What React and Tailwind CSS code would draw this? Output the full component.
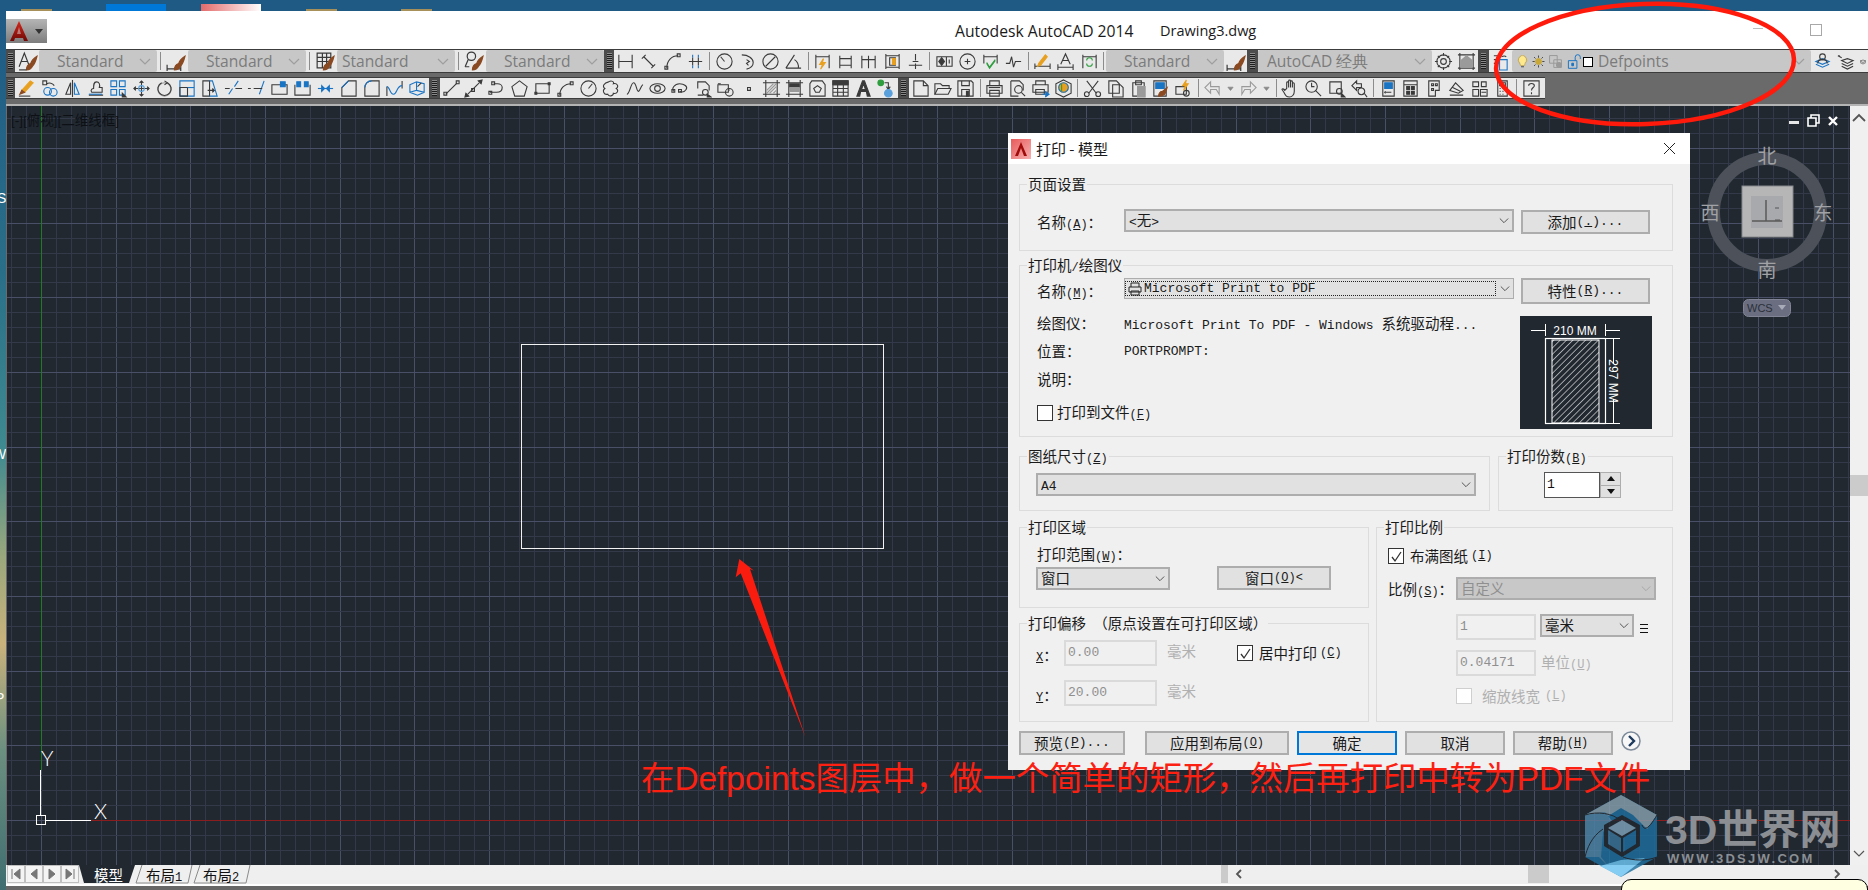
import React from "react";

const K = "#3a3a3a", B = "#1a74c4", R = "#8a4a22", O = "#e8a020", G = "#2f9e3f", Y = "#9a9a9a", L = "#5aa0dc";
const c = (x, y, r) => `M${x - r} ${y}a${r} ${r} 0 1 0 ${2 * r} 0a${r} ${r} 0 1 0 ${-2 * r} 0`;
const brush = [R, "M9 18c0-3 1-5 4-6 1-3 3-5 6-7-1 4-2 7-4 9-1 2-3 4-6 4z", 1];
const dd = Object.assign([["#888", "M6 8h8l-4 5z", 1]], { w: 13 });

const textStyle = [[K, "M2 15L7 2l5 13M4 10h6"], brush, [K, "M2 18h7"]];
const dimStyle = [[K, "M2 17h13M2 13v6M15 13v6"], brush];
const tblStyle = [[K, "M3 2h13v14H3zM3 6h13M3 10h13M8 2v14M12 2v14"], brush];
const mlStyle = [[K, c(8, 5, 4)], [K, "M5 8L2 15M2 15h4"], brush];

const row1b = [
  [[K, "M3 3v14M17 3v14M3 10h14"]],
  [[K, "M3 7l4-4M13 17l4-4M5 5l10 10"]],
  [[K, "M4 17C4 9 9 4 16 4"], [K, "M2 15h3v3H2zM15 2h3v3h-3z"]],
  [[B, "M7 3v3M13 3v3M7 14v3M13 14v3"], [K, "M3 10h14M7 6v8M13 6v8"]],
  0,
  [[K, c(10, 10, 8)], [K, "M10 10L6 5"]],
  [[K, "M4 3c7 0 12 4 12 8 0 4-3 6-7 7M9 8l3 2-3 2 2 2"]],
  [[K, c(10, 10, 8)], [K, "M5 15L15 5"]],
  [[K, "M2 17h16M2 17L11 3M11 8a9 9 0 0 1 4 9"]],
  0,
  [[K, "M3 3v14M17 3v14M3 5h14"], [O, "M11 7l-4 6h3l-2 5 5-7h-3z", 1]],
  [[K, "M4 4v13M16 4v13M4 7h12M4 14h12"]],
  [[K, "M3 4v13M10 4v13M17 4v13M3 8h14"]],
  [[K, "M3 2v16M17 2v16M3 4h14M3 16h14"], [K, "M7 6h6v8H7z"], [O, "M10 7h3v6h-3z", 1]],
  [[K, "M10 2v7M10 12v6M3 14h14M7 10h6"]],
  0,
  [[K, "M2 5h16v10H2zM12 5v10"], [K, "M7 6l3 4-3 4-3-4z", 1], [K, "M15 8v4"]],
  [[K, c(10, 10, 8)], [K, "M10 7v6M7 10h6"]],
  [[K, "M3 3v9M17 3v9M3 5h14"], [G, "M6 12l3 5 6-8", 0], [G, "M6 11l3 5 6-8"]],
  [[K, "M2 12h4l2-7 2 11 2-6h6"]],
  0,
  [[K, "M2 12v6M18 12v6M2 15h16"], [O, "M6 12l7-9 2 2-7 9-3 1z", 1]],
  [[K, "M5 13L10 2l5 11M7 9h6M2 13v6M18 13v6M2 16h16"]],
  [[K, "M3 3v14M17 3v14M3 5h14"], [G, "M7 9a3 3 0 0 1 6 0M13 12a3 3 0 0 1-6 0"]],
  0,
];

const row2a = [
  [[K, "M2 18h12"], [O, "M5 12l9-10 3 2-9 10z", 1], [R, "M3 16l2-4 3 2z", 1]],
  [[K, "M3 2h4v4H3z"], [K, "M7 5a6 6 0 0 1 8 2"], [B, c(8, 13, 4)], [B, c(14, 14, 4)]],
  [[K, "M10 1v18"], [K, "M8 4L3 16h5z"], [B, "M12 4l5 12h-5z"]],
  [[K, "M3 17h15M6 14c-2-3 1-4 2-4 0-4 0-7 3-7s4 3 3 6h3v5z"], [B, "M3 16h14"]],
  [[B, "M2 2h6v6H2zM11 2h6v6h-6zM2 11h6v6H2zM11 11h6v6h-6z"], [K, "M14 15l4 4h-4z", 1]],
  [[K, "M10 2v16M2 10h16"], [K, "M8 4l2-2 2 2M8 16l2 2 2-2M4 8l-2 2 2 2M16 8l2 2-2 2", 1], [L, c(10, 10, 3)]],
  [[Y, c(10, 11, 7)], [K, "M10 2l3 2-3 2"], [K, "M7 4a7 7 0 1 0 6 0"]],
  [[B, "M2 2h15v16H2z"], [K, "M2 9h8v9H2z"], [B, "M10 9h7"]],
  [[K, "M2 2h7v16H2z"], [B, "M9 2h3l5 16H9"], [K, "M7 12h7M12 10l2 2-2 2", 1]],
  [[B, "M5 16l4-6M11 8l4-6"], [K, "M1 10h5M12 10h7"]],
  [[B, "M13 16l5-14"], [K, "M1 10h3M7 10h9"]],
  [[K, "M2 6h16v10H2z"], [B, "M11 3h5v5h-5z", 1]],
  [[K, "M2 6v11h16V6"], [B, "M4 3h4v5H4zM12 3h4v5h-4z", 1]],
  [[B, "M2 10h16"], [B, "M6 7l3 3-3 3zM14 7l-3 3 3 3z", 1]],
  [[K, "M3 18V9l7-7h8v16z"], [B, "M3 9l7-7"]],
  [[K, "M3 18V9c0-4 3-7 7-7h8v16z"], [B, "M3 9c0-4 3-7 7-7"]],
  [[K, "M2 8v10M18 2v8"], [B, "M2 8c3 0 3 8 7 8s3-9 9-9"]],
  [[B, "M2 6l7-3 8 2v9l-7 3-8-3zM9 3v9l-7 2M9 12l8 2"], [K, "M10 8l4-4"]],
];
const row2b = [
  [[K, "M4 16L16 4"], [K, "M2 14h3v3H2zM15 2h3v3h-3z"]],
  [[K, "M4 16L16 4"], [K, "M1 19l4-1-3-3zM19 1l-4 1 3 3z", 1], [K, "M8 10h3v3H8z"]],
  [[K, "M3 14h7c5 0 6-3 6-5s-2-4-5-4H7"], [K, "M2 13h3v3H2zM5 3h3v3H5z"]],
  [[K, "M10 2l8 6-3 10H5L2 8z"]],
  [[K, "M3 5h14v10H3z"], [K, "M2 14h2v2H2zM16 4h2v2h-2z", 1]],
  [[K, "M4 17c0-7 5-12 12-12"], [K, "M2 15h3v3H2zM15 3h3v3h-3z"]],
  [[K, c(10, 10, 8)], [K, "M10 10l4-5"]],
  [[K, "M7 3c3-2 6 0 5 2 4-1 6 3 3 5 3 2 1 6-3 5 0 3-5 4-6 1-4 1-6-4-3-6-3-2-1-6 4-7z"]],
  [[K, "M2 16c3 0 4-12 7-12s3 9 5 9 3-7 5-7"]],
  [[K, c(10, 10, 3)], [K, "M2 10c0-3 4-5 8-5s8 2 8 5-4 5-8 5-8-2-8-5z"]],
  [[K, "M4 13c-3-3 1-8 6-8s9 3 7 6-5 3-7 2"], [K, "M2 11h3v3H2zM9 11h3v3H9z"]],
  [[K, "M5 10V3h8l4 4v5M5 17h6"], [K, c(13, 14, 3)], [K, "M15 16l4 3h-4z", 1]],
  [[K, "M2 6h11v8H2z"], [K, c(14, 14, 4)], [K, "M2 5h3M14 11v1"]],
  [[K, "M9 9h3v3H9z"]],
  [[K, "M4 4h12v12H4zM1 4h18M1 16h18M4 1v18M16 1v18"], [Y, "M5 12l7-7M5 15l10-10M8 15l7-7M12 15l3-3"]],
  [[K, "M4 4h12v12H4zM1 4h18M1 16h18M4 1v18M16 1v18"], [K, "M5 5h10v4H5z", 1], [Y, "M5 9h10v4H5z", 1]],
  [[K, "M4 2h11l3 4v12H2V5z"], [K, "M6 10l4-3 4 3-2 4H8z"]],
  [[K, "M2 2h16v16H2zM2 6h16M2 10h16M2 14h16M7 6v12M13 6v12"], [K, "M2 2h16v4H2z", 1]],
  [[K, "M3 18L9 2h2l6 16h-3l-1-5H7l-1 5zM8 11h4l-2-6z", 1]],
  [[G, c(5, 4, 3), 1], [K, "M9 4h4v6M11 8l2 3 2-3"], [L, c(13, 15, 4), 1]],
];
const row2c = [
  [[K, "M3 2h10l5 5v11H3zM13 2v5h5"]],
  [[K, "M2 16V5h6l2 2h7v3"], [K, "M2 16l3-6h14l-3 6z", 0]],
  [[K, "M2 2h14l2 2v14H2zM6 2v5h8V2M6 18v-7h8v7"], [K, "M11 13h2v5h-2z", 1]],
  0,
  [[K, "M5 7V2h10v5M2 7h16v8H2zM5 12h10v6H5z"], [K, "M4 9h12", 0]],
  [[K, "M3 2h9l4 4v6M3 2v16h8"], [K, c(11, 11, 4)], [K, "M14 14l4 4"]],
  [[K, "M5 6V2h10v4M2 6h16v8H2zM5 11h9v5H5z"], [B, "M12 16h5M15 13l4 3-4 3", 1]],
  [[K, "M10 1l8 4v10l-8 4-8-4V5z"], [O, c(10, 9, 5), 1], [B, c(10, 9, 5)], [G, "M8 5v8"]],
  0,
  [[K, "M4 2l10 13M16 2L6 15"], [K, c(4, 16, 2.5)], [K, c(16, 16, 2.5)]],
  [[K, "M3 2h8l3 3v10H3z"], [K, "M7 6h8l3 3v10H7z"]],
  [[K, "M4 4h12v14H4zM7 2h6v4H7z"], [Y, "M9 8h8v11H9z", 1]],
  [[K, "M3 2h13v16H3z"], [B, "M5 4h9v6H5z", 1], [R, "M8 18c0-3 2-5 4-5l5-4-2 6c-1 2-4 3-7 3z", 1]],
  [[K, "M2 8h11v8H2z"], [K, c(13, 15, 3)], [O, "M13 1l-4 6h3l-2 5 5-7h-3z", 1]],
  0,
  [[Y, "M8 3L2 9l6 6v-4h6l3 5V8h-9z"]],
  dd,
  [[Y, "M12 3l6 6-6 6v-4H6l-3 5V8h9z"]],
  dd,
  0,
  [[K, "M6 10V4a1 1 0 0 1 2 0v5-7a1 1 0 0 1 2 0v7-6a1 1 0 0 1 2 0v6-4a1 1 0 0 1 2 0v8c0 3-2 6-5 6s-4-1-6-5l-2-3c0-1 2-1 3 1z"]],
  [[K, c(8, 8, 6)], [K, "M8 4v4h3M12 12l6 6"]],
  [[K, "M3 3h12v12H3z"], [K, c(13, 13, 3)], [K, "M15 15l4 4h-4z", 1]],
  [[K, "M2 7l5-5v3h5v4H7v3z"], [K, c(12, 13, 3.5)], [K, "M15 15l3 4"]],
  0,
  [[K, "M4 2h12v16H4z"], [B, "M6 4h8v6H6z", 1], [K, "M7 14h6M7 13l-1 1 1 1"]],
  [[K, "M3 2h14v16H3zM3 6h14"], [K, "M6 8h3v3H6zM11 8h3v3h-3zM6 13h3v3H6zM11 13h3v3h-3z", 1]],
  [[K, "M5 2h11v10h-4v6H5zM8 5h2v2H8zM12 5h2v2h-2zM8 10h2v2H8z"]],
  [[K, "M3 12l6-8 8 8-5 3zM3 17h14M6 9l8 4"]],
  [[K, "M3 3h6v5H3zM12 3h5v5h-5zM3 11h6v7H3z"], [K, "M11 11h7v7h-7zM12 14h5"]],
  [[K, "M5 2h10v16H5zM7 4h6v3H7zM7 10h1M10 10h1M13 10h0M7 13h1M10 13h1M7 16h1M10 16h1"]],
  0,
  [[K, "M2 2h16v16H2z"], [K, "M7 7c0-3 6-3 6 0 0 2-3 2-3 5M10 14v2"]],
];

function Ic({ s, w, size = 19 }) {
  return (
    <span className="flex items-center justify-center shrink-0" style={{ width: w }}>
      <svg width={size} height={size} viewBox="0 0 20 20" fill="none" strokeWidth="1.15">
        {s.map(([col, d, f], i) => (
          <path key={i} d={d} stroke={col} fill={f ? col : "none"} />
        ))}
      </svg>
    </span>
  );
}
const Sep = ({ w }) => (
  <span className="flex shrink-0 items-center justify-center" style={{ width: w }}>
    <span className="h-[18px] w-px bg-[#8c8c8c]" />
  </span>
);
const Set = ({ list, w, sw = 6 }) => list.map((s, i) => (s === 0 ? <Sep key={i} w={sw} /> : <Ic key={i} s={s} w={s.w || w} />));

const Grip = ({ w }) => (
  <div className="flex shrink-0 items-center justify-center bg-[#4c4c4c]" style={{ width: w }}>
    <span className="h-[16px] w-[5px] bg-[repeating-linear-gradient(0deg,#1e1e1e_0_1px,#8a8a8a_1px_2px)]" />
  </div>
);
const Chev = ({ col = "#9e9e9e", w = 12 }) => (
  <svg width={w} height="8" viewBox="0 0 12 8" fill="none" stroke={col} strokeWidth="1.2" className="shrink-0">
    <path d="M1 1l5 5 5-5" />
  </svg>
);
function TCombo({ w, pad, text, children }) {
  return (
    <div className="flex shrink-0 items-center rounded-[2px] bg-[#c7c7c7] pr-[6px] pt-px font-['Open_Sans',sans-serif] text-[15.6px] text-[#7b7b7b]" style={{ width: w, paddingLeft: pad }}>
      {children}
      <span className="flex-1 whitespace-nowrap">{text}</span>
      <Chev />
    </div>
  );
}

function T({ t, m }) {
  const parts = t.split(/([\u3000-\u9fff\uff00-\uffef]+)/);
  return (
    <>
      {parts.map((p, i) =>
        i % 2 ? (
          <span key={i} className="font-['Noto_Sans_CJK_SC',sans-serif] text-[14.5px]">{p}</span>
        ) : (
          <span key={i} className={"font-['Liberation_Mono',monospace] " + (m ? "text-[13px]" : "text-[12px]")}>
            {p.split(/_(.)/).map((q, j) => (j % 2 ? <span key={j} className="underline">{q}</span> : q))}
          </span>
        )
      )}
    </>
  );
}
function Group({ label, className, children }) {
  return (
    <div className={"relative border border-[#dcdcdc] " + className}>
      <div className="absolute left-[7px] top-[-12px] whitespace-nowrap bg-[#f0f0f0] px-px leading-[20px] text-[#1a1a1a]">
        <T t={label} />
      </div>
      {children}
    </div>
  );
}
function DCombo({ w, h = 23, disabled, children }) {
  return (
    <div className={"flex shrink-0 items-center border-2 border-[#adadad] px-[3px] " + (disabled ? "bg-[#c8c8c8] text-[#8f8f8f]" : "bg-[#e1e1e1] text-[#1a1a1a]")} style={{ width: w, height: h }}>
      <div className="flex-1 overflow-hidden whitespace-nowrap">{children}</div>
      <Chev col={disabled ? "#a8a8a8" : "#555"} w={10} />
    </div>
  );
}
function Btn({ w, h = 24, blue, children }) {
  return (
    <div className={"flex shrink-0 items-center justify-center text-[#1a1a1a] " + (blue ? "border-2 border-[#0078d7] bg-[#e5e5e5]" : "border-2 border-[#adadad] bg-[#e1e1e1]")} style={{ width: w, height: h }}>
      {children}
    </div>
  );
}
const Check = ({ on, off }) => (
  <span className={"flex h-[16px] w-[16px] shrink-0 items-center justify-center border " + (off ? "border-[#cfcfcf] bg-white" : "border-[#333] bg-white")}>
    {on && (
      <svg width="13" height="13" viewBox="0 0 13 13" fill="none" stroke="#333" strokeWidth="1.3">
        <path d="M2 7l3 4 6-9" />
      </svg>
    )}
  </span>
);
const Input = ({ w, v, bg }) => (
  <div className={"flex h-[26px] shrink-0 items-start border-2 border-[#dadada] pl-[2px] pt-[1px] text-[#8f8f8f] " + bg} style={{ width: w }}>
    <T t={v} m />
  </div>
);

function Preview() {
  return (
    <svg width="132" height="113" className="shrink-0 bg-[#212830]" fill="none" stroke="#fff">
      <defs>
        <pattern id="hatch" width="4.5" height="4.5" patternUnits="userSpaceOnUse" patternTransform="rotate(45)">
          <line x1="0" y1="0" x2="0" y2="4.5" stroke="#f0f0f0" strokeWidth="1.2" />
        </pattern>
      </defs>
      <rect x="25.5" y="22.5" width="60" height="85" strokeWidth="1.2" />
      <rect x="32" y="24" width="47" height="83" fill="url(#hatch)" strokeWidth="1" />
      <path d="M11 14.5h14M85 14.5h15M25.5 8v12M85.5 8v12M86 22.5h14M86 107.5h14M93.5 23v25M93.5 83v24" strokeWidth="1" />
      <text x="55" y="19" textAnchor="middle" fill="#fff" stroke="none" fontSize="12" fontFamily="Liberation Sans, sans-serif">210 MM</text>
      <text transform="translate(89 65) rotate(90)" textAnchor="middle" fill="#fff" stroke="none" fontSize="12" fontFamily="Liberation Sans, sans-serif">297 MM</text>
    </svg>
  );
}

function Dialog() {
  return (
    <div className="absolute left-[1008px] top-[133px] flex h-[637px] w-[682px] flex-col bg-[#f0f0f0] font-['Noto_Sans_CJK_SC',sans-serif] leading-[20px]">
      <div className="flex h-[31px] shrink-0 items-center bg-white pl-[3px]">
        <span className="flex h-[20px] w-[20px] items-center justify-center bg-[linear-gradient(135deg,#e85a5a,#f6b0b0)]">
          <svg width="16" height="16" viewBox="0 0 16 16"><path d="M8 1l6 14H11L8 7 5 15H2z" fill="#a00c0c" /></svg>
        </span>
        <span className="ml-[5px] text-[15px] text-[#1a1a1a]">打印 - 模型</span>
        <svg className="ml-auto mr-[14px]" width="13" height="13" viewBox="0 0 13 13" stroke="#222" strokeWidth="1"><path d="M1 1l11 11M12 1L1 12" /></svg>
      </div>
      <div className="ml-[11px] mt-[20px] flex w-[654px] flex-col">
        <Group label="页面设置" className="flex h-[67px] pl-[17px] pt-[24px]">
          <div className="w-[87px] pt-[2px] text-[#1a1a1a]"><T t="名称(_A)：" /></div>
          <DCombo w={390}><T t="<无>" m /></DCombo>
          <div className="ml-[7px] mt-px"><Btn w={129}><T t="添加(_.)..." m /></Btn></div>
        </Group>
        <Group label="打印机/绘图仪" className="mt-[14px] h-[172px] pl-[17px] pt-[12px]">
          <div className="flex">
            <div className="w-[87px] pt-[2px] text-[#1a1a1a]"><T t="名称(_M)：" /></div>
            <div className="flex h-[21px] w-[390px] shrink-0 items-center border border-[#adadad] bg-[#e1e1e1] pr-[3px] text-[#1a1a1a]">
              <div className="flex h-[15px] flex-1 items-center gap-[2px] border border-dotted border-[#222] pl-[2px]">
                <svg width="14" height="14" viewBox="0 0 14 14" fill="none" stroke="#222"><path d="M3 5V1h8v4M1 5h12v5H1zM3 9h8v4H3z" /></svg>
                <T t="Microsoft Print to PDF" m />
              </div>
              <span className="ml-[4px]"><Chev col="#555" w={10} /></span>
            </div>
            <div className="ml-[7px]"><Btn w={129} h={26}><T t="特性(_R)..." m /></Btn></div>
          </div>
          <div className="mt-[6px] flex">
            <div className="w-[483px] text-[#1a1a1a]">
              <div className="flex h-[28px] items-center"><span className="w-[87px]"><T t="绘图仪：" /></span><span className="whitespace-nowrap"><T t="Microsoft Print To PDF - Windows 系统驱动程..." m /></span></div>
              <div className="flex h-[28px] items-center"><span className="w-[87px]"><T t="位置：" /></span><T t="PORTPROMPT:" m /></div>
              <div className="flex h-[27px] items-center"><span className="w-[87px]"><T t="说明：" /></span></div>
              <div className="mt-[12px] flex h-[16px] items-center gap-[4px]"><Check /><span className="whitespace-nowrap"><T t="打印到文件(_F)" /></span></div>
            </div>
            <div className="mt-[6px]"><Preview /></div>
          </div>
        </Group>
        <div className="mt-[19px] flex gap-[8px]">
          <Group label="图纸尺寸(_Z)" className="h-[55px] w-[471px] pl-[16px] pt-[16px]">
            <DCombo w={440}><T t="A4" m /></DCombo>
          </Group>
          <Group label="打印份数(_B)" className="h-[55px] w-[175px] pl-[45px] pt-[15px]">
            <div className="flex">
              <div className="flex h-[26px] w-[56px] items-center border border-[#555] bg-white pl-[2px] text-[#111]"><T t="1" m /></div>
              <div className="flex h-[26px] w-[21px] flex-col border border-[#adadad] bg-[#e1e1e1]">
                <span className="flex flex-1 items-center justify-center border-b border-[#adadad]"><svg width="8" height="5"><path d="M4 0l4 5H0z" fill="#111" /></svg></span>
                <span className="flex flex-1 items-center justify-center"><svg width="8" height="5"><path d="M4 5l4-5H0z" fill="#111" /></svg></span>
              </div>
            </div>
          </Group>
        </div>
        <div className="mt-[16px] flex gap-[7px]">
          <div className="flex w-[350px] flex-col">
            <Group label="打印区域" className="h-[81px] pl-[16px] pt-[15px]">
              <div className="h-[20px] pl-px text-[#1a1a1a]"><T t="打印范围(_W)：" /></div>
              <div className="mt-[4px] flex">
                <DCombo w={134}><T t="窗口" /></DCombo>
                <div className="ml-[47px] -mt-px"><Btn w={114}><T t="窗口(_O)<" /></Btn></div>
              </div>
            </Group>
            <Group label="打印偏移 （原点设置在可打印区域）" className="mt-[15px] h-[99px] pl-[16px] pt-[16px]">
              <div className="flex">
                <span className="w-[28px] pt-[4px] text-[#1a1a1a]"><T t="_X：" /></span>
                <Input w={93} v="0.00" bg="bg-[#f0f0f0]" />
                <span className="ml-[10px] text-[#b0b0b0]"><T t="毫米" /></span>
                <span className="ml-[41px] mt-[5px] flex h-[16px] items-center gap-[3px] whitespace-nowrap text-[#1a1a1a]"><Check on /><T t="居中打印(_C)" /></span>
              </div>
              <div className="mt-[12px] flex">
                <span className="w-[28px] pt-[4px] text-[#1a1a1a]"><T t="_Y：" /></span>
                <Input w={93} v="20.00" bg="bg-[#f0f0f0]" />
                <span className="ml-[10px] text-[#b0b0b0]"><T t="毫米" /></span>
              </div>
            </Group>
          </div>
          <Group label="打印比例" className="h-[195px] w-[297px] pl-[11px] pt-[20px]">
            <div className="flex h-[16px] items-center gap-[3px] text-[#1a1a1a]"><Check on /><T t="布满图纸(_I)" /></div>
            <div className="mt-[13px] flex">
              <span className="w-[68px] pt-px text-[#1a1a1a]"><T t="比例(_S)：" /></span>
              <DCombo w={200} disabled><T t="自定义" /></DCombo>
            </div>
            <div className="ml-[68px] mt-[12px] flex">
              <Input w={80} v="1" bg="bg-[#f0f0f0]" />
              <div className="ml-[4px]"><DCombo w={94}><T t="毫米" /></DCombo></div>
              <span className="ml-[6px] mt-[10px] flex h-[9px] w-[8px] flex-col justify-between">
                <span className="h-px bg-[#111]" /><span className="h-px bg-[#111]" /><span className="h-px bg-[#111]" />
              </span>
            </div>
            <div className="ml-[68px] mt-[10px] flex">
              <Input w={80} v="0.04171" bg="bg-[#f0f0f0]" />
              <span className="ml-[5px] pt-[1px] text-[#b0b0b0]"><T t="单位(_U)" /></span>
            </div>
            <div className="ml-[68px] mt-[12px] flex h-[16px] items-center gap-[5px] text-[#b0b0b0]"><Check off /><T t="缩放线宽(_L)" /></div>
          </Group>
        </div>
        <div className="mt-[9px] flex items-start">
          <Btn w={106}><T t="预览(_P)..." m /></Btn>
          <div className="ml-[20px]"><Btn w={144}><T t="应用到布局(_O)" /></Btn></div>
          <div className="ml-[8px]"><Btn w={100} blue><T t="确定" /></Btn></div>
          <div className="ml-[8px]"><Btn w={100}><T t="取消" /></Btn></div>
          <div className="ml-[8px]"><Btn w={100}><T t="帮助(_H)" /></Btn></div>
          <svg className="ml-[8px]" width="20" height="20" viewBox="0 0 20 20" fill="none">
            <circle cx="10" cy="10" r="9" stroke="#7d8a9a" strokeWidth="1.5" fill="#f7f7f7" />
            <path d="M8 5l5 5-5 5" stroke="#1d3a5f" strokeWidth="2.4" />
          </svg>
        </div>
      </div>
    </div>
  );
}

function CanvasArt() {
  const xs = [], ys = [];
  for (let i = -2; i < 125; i++) xs.push({ v: Math.round(41 + i * 14.933) + 0.5, m: i % 5 === 0 });
  for (let i = -3; i < 48; i++) ys.push({ v: Math.round(820 - i * 14.933) + 0.5, m: i % 5 === 0 });
  return (
    <svg className="absolute inset-0" width="1843" height="759" viewBox="7 106 1843 759" fill="none">
      <g shapeRendering="crispEdges">
        {xs.map((l, i) => <line key={i} x1={l.v} x2={l.v} y1="106" y2="865" stroke={l.m ? "#4a4f68" : "#333949"} />)}
        {ys.map((l, i) => <line key={i} y1={l.v} y2={l.v} x1="7" x2="1850" stroke={l.m ? "#4a4f68" : "#333949"} />)}
        <line x1="41.5" x2="41.5" y1="106" y2="770" stroke="#1f7a22" />
        <line y1="820.5" y2="820.5" x1="91" x2="1850" stroke="#8c1d1f" />
        <rect x="521.5" y="344.5" width="362" height="203.5" stroke="#f2f2f2" />
        <line x1="40.5" x2="40.5" y1="770" y2="815" stroke="#fff" />
        <line y1="820.5" y2="820.5" x1="46" x2="91" stroke="#fff" />
        <rect x="36.5" y="815.5" width="9" height="9" stroke="#fff" />
      </g>
      <text x="41" y="766" fill="#fff" fontSize="21" fontWeight="300" fontFamily="Lato, Liberation Sans, sans-serif">Y</text>
      <text x="94" y="819" fill="#fff" fontSize="21" fontWeight="300" fontFamily="Lato, Liberation Sans, sans-serif">X</text>
      <text x="11" y="125" fill="#0d1116" fontSize="13.5" fontFamily="Liberation Sans, Noto Sans CJK SC, sans-serif">[-][俯视][二维线框]</text>
      <circle cx="1767" cy="212" r="53.5" stroke="#4c515a" strokeWidth="13" />
      <rect x="1742" y="186" width="51" height="51" fill="#b6b6b6" stroke="#85888c" />
      <rect x="1751" y="196" width="32" height="32" fill="#a8a9ac" />
      <path d="M1766 200v21M1752 221h30" stroke="#5a5a5a" strokeWidth="1.5" />
      <path d="M1775 208h4M1775 220h5" stroke="#555" />
      {[["北", 1767, 163], ["南", 1767, 277], ["西", 1710, 220], ["东", 1823, 220]].map(([t, x, y]) => (
        <text key={t} x={x} y={y} textAnchor="middle" fill="#a0a2a5" fontSize="19" fontFamily="Noto Sans CJK SC, sans-serif">{t}</text>
      ))}
      <rect x="1743.5" y="299.5" width="47" height="17" rx="5" fill="#6a6e80" stroke="#808494" />
      <text x="1747" y="312" fill="#2b303a" fontSize="11" fontFamily="Liberation Sans, sans-serif">WCS</text>
      <path d="M1778 305h8l-4 5z" fill="#a8abb8" />
      <rect x="1789" y="121" width="10" height="3" fill="#e6e6e6" />
      <path d="M1808 118h8v8h-8zM1811 118v-3h8v8h-3" stroke="#fff" strokeWidth="1.6" />
      <path d="M1829 117l8 8M1837 117l-8 8" stroke="#fff" strokeWidth="2.4" />
    </svg>
  );
}

function Overlay() {
  return (
    <svg className="pointer-events-none absolute inset-0" width="1868" height="890" viewBox="0 0 1868 890" fill="none">
      <ellipse cx="1645" cy="64" rx="149" ry="60" stroke="#ff1a0c" strokeWidth="4.5" transform="rotate(-2 1645 64)" />
      <path d="M739.3 559L735.7 577.3 740.7 573.3 805.3 736.7 750 569 754 570.7z" fill="#fb1c10" />
      <text x="641" y="790" fill="#fb2012" fontSize="33.4" fontFamily="Liberation Sans, Noto Sans CJK SC, sans-serif">在Defpoints图层中，做一个简单的矩形，然后再打印中转为PDF文件</text>
      <g opacity="0.82">
        <path d="M1621 795l36 20v42l-36 20-36-20v-42z" fill="#1e6f9f" />
        <path d="M1621 795l36 20-10 14-14-14-12-7-16 10-20 4v-7z" fill="#87a0ae" />
        <path d="M1585 815l20-3 8 10-10 10-2 25 8 10-10-10-14-0z" fill="#4f86aa" />
        <path d="M1600 866l21-6 24-2-24 19z" fill="#6fc6f4" />
        <path d="M1622 815l18 10v21l-18 11-18-11v-21z" fill="#212830" />
        <path d="M1622 820l14 8-14 8-14-8z" fill="#7ea2ba" />
        <path d="M1608 830l13 8v14l-13-8z" fill="#3a7398" />
        <path d="M1636 830l-13 8v14l13-8z" fill="#1f6d9f" />
        <path d="M1585 815c12-4 28-2 36 6M1657 815c-6 10-12 18-15 10M1657 857c-10 4-24 4-34 0M1585 857c2-8 6-20 18-28" stroke="#212830" strokeWidth="1" />
      </g>
      <text x="1665" y="844" fill="#8b8e93" fontSize="41" fontWeight="700" fontFamily="Liberation Sans, Noto Sans CJK SC, sans-serif">3D世界网</text>
      <text x="1667" y="863" fill="#8b8e93" fontSize="13" fontWeight="700" letterSpacing="2.3" fontFamily="Liberation Sans, sans-serif">WWW.3DSJW.COM</text>
    </svg>
  );
}

const Nav = ({ d }) => (
  <span className="flex h-[18px] w-[18px] items-center justify-center border border-[#c0c0c0] bg-[#f4f4f4]">
    <svg width="12" height="12" viewBox="0 0 12 12" fill="#777" stroke="#777"><path d={d} /></svg>
  </span>
);
function Tab({ w, dark, text, pts, pl }) {
  return (
    <div className="relative h-[19px] shrink-0" style={{ width: w, paddingLeft: pl }}>
      <svg className="absolute inset-0" width={w} height="19" fill={dark ? "#212830" : "none"} stroke={dark ? "none" : "#8a8a8a"}>
        <path d={pts} />
      </svg>
      <span className={"relative block leading-[18px] " + (dark ? "text-white" : "text-[#111]")}><T t={text} /></span>
    </div>
  );
}

export default function App() {
  return (
    <div className="relative h-[890px] w-[1868px] overflow-hidden bg-[#1f5a85] font-['Noto_Sans_CJK_SC',sans-serif]">
      <div className="flex h-[11px] items-start">
        <span className="ml-[21px] mt-[9px] h-[2px] w-[31px] bg-[#a8905a]" />
        <span className="ml-[54px] mt-[4px] h-[7px] w-[60px] bg-[#0078d7]" />
        <span className="ml-[35px] mt-[4px] h-[7px] w-[60px] bg-[linear-gradient(90deg,#e46a6a,#ffffff)]" />
        <span className="ml-[45px] mt-[9px] h-[2px] w-[31px] bg-[#a8905a]" />
        <span className="ml-[64px] mt-[9px] h-[2px] w-[31px] bg-[#a8905a]" />
      </div>
      <div className="flex h-[879px]">
        <div className="relative w-[6px] shrink-0 overflow-hidden bg-[linear-gradient(180deg,#1f5a85_0%,#2a6f88_30%,#3f8a90_50%,#9aa77c_62%,#c9b27c_72%,#6c9080_84%,#3f6d70_100%)] text-[14px] leading-none text-white">
          <span className="absolute left-[-3px] top-[180px] font-['Liberation_Sans',sans-serif]">S</span>
          <span className="absolute left-[-7px] top-[436px] font-['Liberation_Sans',sans-serif]">W</span>
          <span className="absolute left-[-5px] top-[680px] font-['Liberation_Sans',sans-serif]">P</span>
        </div>
        <div className="flex w-[1862px] flex-col bg-[#6a6a6a]">
          <div className="flex h-[38px] shrink-0 items-start bg-white">
            <div className="mt-[8px] flex h-[24px] w-[41px] items-center bg-[linear-gradient(180deg,#b5b5b5,#7d7d7d)] pl-[2px]">
              <svg width="22" height="24" viewBox="0 0 22 24">
                <defs><linearGradient id="al" x1="0" x2="0" y1="0" y2="1"><stop offset="0" stopColor="#d8281c" /><stop offset="1" stopColor="#6e0a06" /></linearGradient></defs>
                <path d="M11 2l9 20h-4l-1-3H7l-1 3H2z" fill="url(#al)" />
                <path d="M11 8l2 7H9z" fill="#d9d9d9" opacity="0.5" />
              </svg>
              <svg className="ml-[5px]" width="8" height="5"><path d="M0 0h8L4 5z" fill="#333" /></svg>
            </div>
            <span className="ml-[908px] mt-[10px] w-[181px] whitespace-nowrap font-['Open_Sans',sans-serif] text-[15.7px] leading-[20px] text-[#1a1a1a]">Autodesk AutoCAD 2014</span>
            <span className="ml-[24px] mt-[10px] w-[96px] whitespace-nowrap font-['Open_Sans',sans-serif] text-[14.5px] leading-[20px] text-[#1a1a1a]">Drawing3.dwg</span>
            <span className="ml-[497px] mt-[17px] h-px w-[10px] bg-[#bdbdbd]" />
            <span className="ml-[47px] mt-[13px] h-[12px] w-[12px] border border-[#a8a8a8]" />
          </div>

          <div className="flex h-[24px] shrink-0 border-y border-[#3c3c3c] bg-[#4c4c4c]">
            <Grip w={9} />
            <div className="flex bg-[#e9e9e9]">
              <Ic s={textStyle} w={24} size={21} />
              <TCombo w={118} pad={18} text="Standard" />
              <Sep w={6} />
              <Ic s={dimStyle} w={25} size={21} />
              <TCombo w={118} pad={18} text="Standard" />
              <Sep w={6} />
              <Ic s={tblStyle} w={25} size={21} />
              <TCombo w={118} pad={5} text="Standard" />
              <Sep w={6} />
              <Ic s={mlStyle} w={25} size={21} />
              <TCombo w={118} pad={18} text="Standard" />
            </div>
            <Grip w={10} />
            <div className="flex bg-[#e9e9e9]">
              <Set list={row1b} w={23.3} sw={5.2} />
              <TCombo w={118} pad={18} text="Standard" />
              <Ic s={dimStyle} w={23} size={21} />
            </div>
            <Grip w={11} />
            <div className="flex bg-[#e9e9e9]">
              <TCombo w={174} pad={9} text="AutoCAD 经典" />
              <Ic s={[[K, c(10, 10, 7)], [K, c(10, 10, 3)], [K, "M10 1v3M10 16v3M1 10h3M16 10h3M4 4l2 2M14 14l2 2M16 4l-2 2M4 16l2-2"]]} w={23} />
              <Ic s={[[K, "M3 1v18M17 1v18M1 3h18M1 17h18"], [Y, "M4 9l6-5 6 5v7H4z", 1]]} w={23} />
            </div>
            <Grip w={11} />
            <div className="flex flex-1 bg-[#e9e9e9]">
              <Ic s={[[K, "M3 4h5M3 8h5M3 12h5"], [B, "M9 8h8v11H9z"], [K, "M11 5c2-1 4-1 5 0"]]} w={23} />
              <TCombo w={299} pad={3} text="Defpoints">
                <span className="mr-[5px] flex items-center gap-[1px]">
                  <Ic s={[["#c9a83a", "M10 2a6 6 0 0 0-4 10c1 1 1 2 1 3h6c0-1 0-2 1-3a6 6 0 0 0-4-10z"], ["#ffe98a", "M10 3a5 5 0 0 0-3 8c1 1 1 2 1 3h4c0-1 0-2 1-3a5 5 0 0 0-3-8z", 1], [K, "M8 17h4"]]} w={15} />
                  <Ic s={[["#c9a83a", c(10, 10, 4), 1], [K, "M10 2v3M10 15v3M2 10h3M15 10h3M4 4l2 2M14 14l2 2M16 4l-2 2M4 16l2-2"]]} w={15} />
                  <Ic s={[[Y, "M3 3h9v9H3zM8 8h9v9H8z"], [Y, c(14, 14, 3), 1]]} w={17} />
                  <Ic s={[[B, "M4 9h10v9H4z"], [B, "M12 9V5a3 3 0 0 1 6 0v2"], [B, "M8 12h2v3H8z", 1]]} w={17} />
                  <span className="h-[10px] w-[10px] border border-black bg-white" />
                </span>
              </TCombo>
              <Ic s={[[B, "M3 10l7-3 7 3-7 3zM3 13l7 3 7-3"], [K, c(10, 5, 3)], [K, "M5 12c0-3 2-4 5-4s5 1 5 4"]]} w={23} />
              <Ic s={[[K, "M6 9l6-2 6 2-6 3zM6 12l6 3 6-3M6 15l6 3 6-3"], [K, "M2 4l4 2M2 4l2 0"]]} w={23} />
              <Ic s={[[K, "M6 9l6-2 6 2-6 3zM6 12l6 3 6-3"]]} w={10} />
            </div>
          </div>

          <div className="mt-[4px] flex h-[22px] shrink-0">
            <div className="flex border-y border-[#3c3c3c] bg-[#4c4c4c]">
              <Grip w={9} />
              <div className="flex w-[413.6px] bg-[#e9e9e9]"><Set list={row2a} w={23} /></div>
              <Grip w={11} />
              <div className="flex w-[458px] bg-[#e9e9e9]"><Set list={row2b} w={22.9} /></div>
              <Grip w={11} />
              <div className="flex w-[636.5px] bg-[#e9e9e9]"><Set list={row2c} w={22.9} /></div>
            </div>
          </div>
          <div className="h-[5px] shrink-0" />
          <div className="h-[2px] shrink-0 bg-[#b4b4b4]" />

          <div className="flex h-[759px] shrink-0 pl-px">
            <div className="relative h-full w-[1843px] overflow-hidden bg-[#212830]">
              <CanvasArt />
            </div>
            <div className="flex w-[18px] flex-col items-center bg-[#f0f0f0] pt-[7px]">
              <svg width="14" height="9" viewBox="0 0 14 9" fill="none" stroke="#555" strokeWidth="1.8"><path d="M1 8l6-6 6 6" /></svg>
              <span className="mt-[353px] h-[21px] w-full bg-[#cbcbcb]" />
              <span className="mb-[7px] mt-auto"><Chev col="#555" w={12} /></span>
            </div>
          </div>

          <div className="flex h-[19px] shrink-0 items-start bg-[#efefef] pl-px">
            <Nav d="M2 1v10M10 1v10L4 6z" />
            <Nav d="M9 1v10L3 6z" />
            <Nav d="M3 1v10l6-5z" />
            <Nav d="M10 1v10M2 1v10l6-5z" />
            <Tab w={56} dark text="模型" pl={15} pts="M0 0h56l-6 18H5z" />
            <Tab w={58} text="布局1" pl={11} pts="M1 18L7 0M53 18L57 0M1 18h52" />
            <Tab w={58} text="布局2" pl={10} pts="M1 18L7 0M53 18L57 0M1 18h52" />
            <span className="ml-[970px] h-[18px] w-[7px] bg-[#cbcbcb]" />
            <svg className="ml-[7px] mt-[4px]" width="8" height="10" fill="none" stroke="#555" strokeWidth="1.8"><path d="M6 1L2 5l4 4" /></svg>
            <span className="ml-[285px] h-[18px] w-[21px] bg-[#cbcbcb]" />
            <svg className="ml-[284px] mt-[4px]" width="8" height="10" fill="none" stroke="#555" strokeWidth="1.8"><path d="M2 1l4 4-4 4" /></svg>
          </div>
          <div className="h-[2px] shrink-0 bg-white" />
          <div className="flex-1 bg-[#666]" />
        </div>
      </div>
      <Dialog />
      <div className="absolute left-[1621px] top-[879px] h-[20px] w-[247px] rounded-t-[10px] border border-black bg-[#ffffe1]" />
      <Overlay />
    </div>
  );
}
